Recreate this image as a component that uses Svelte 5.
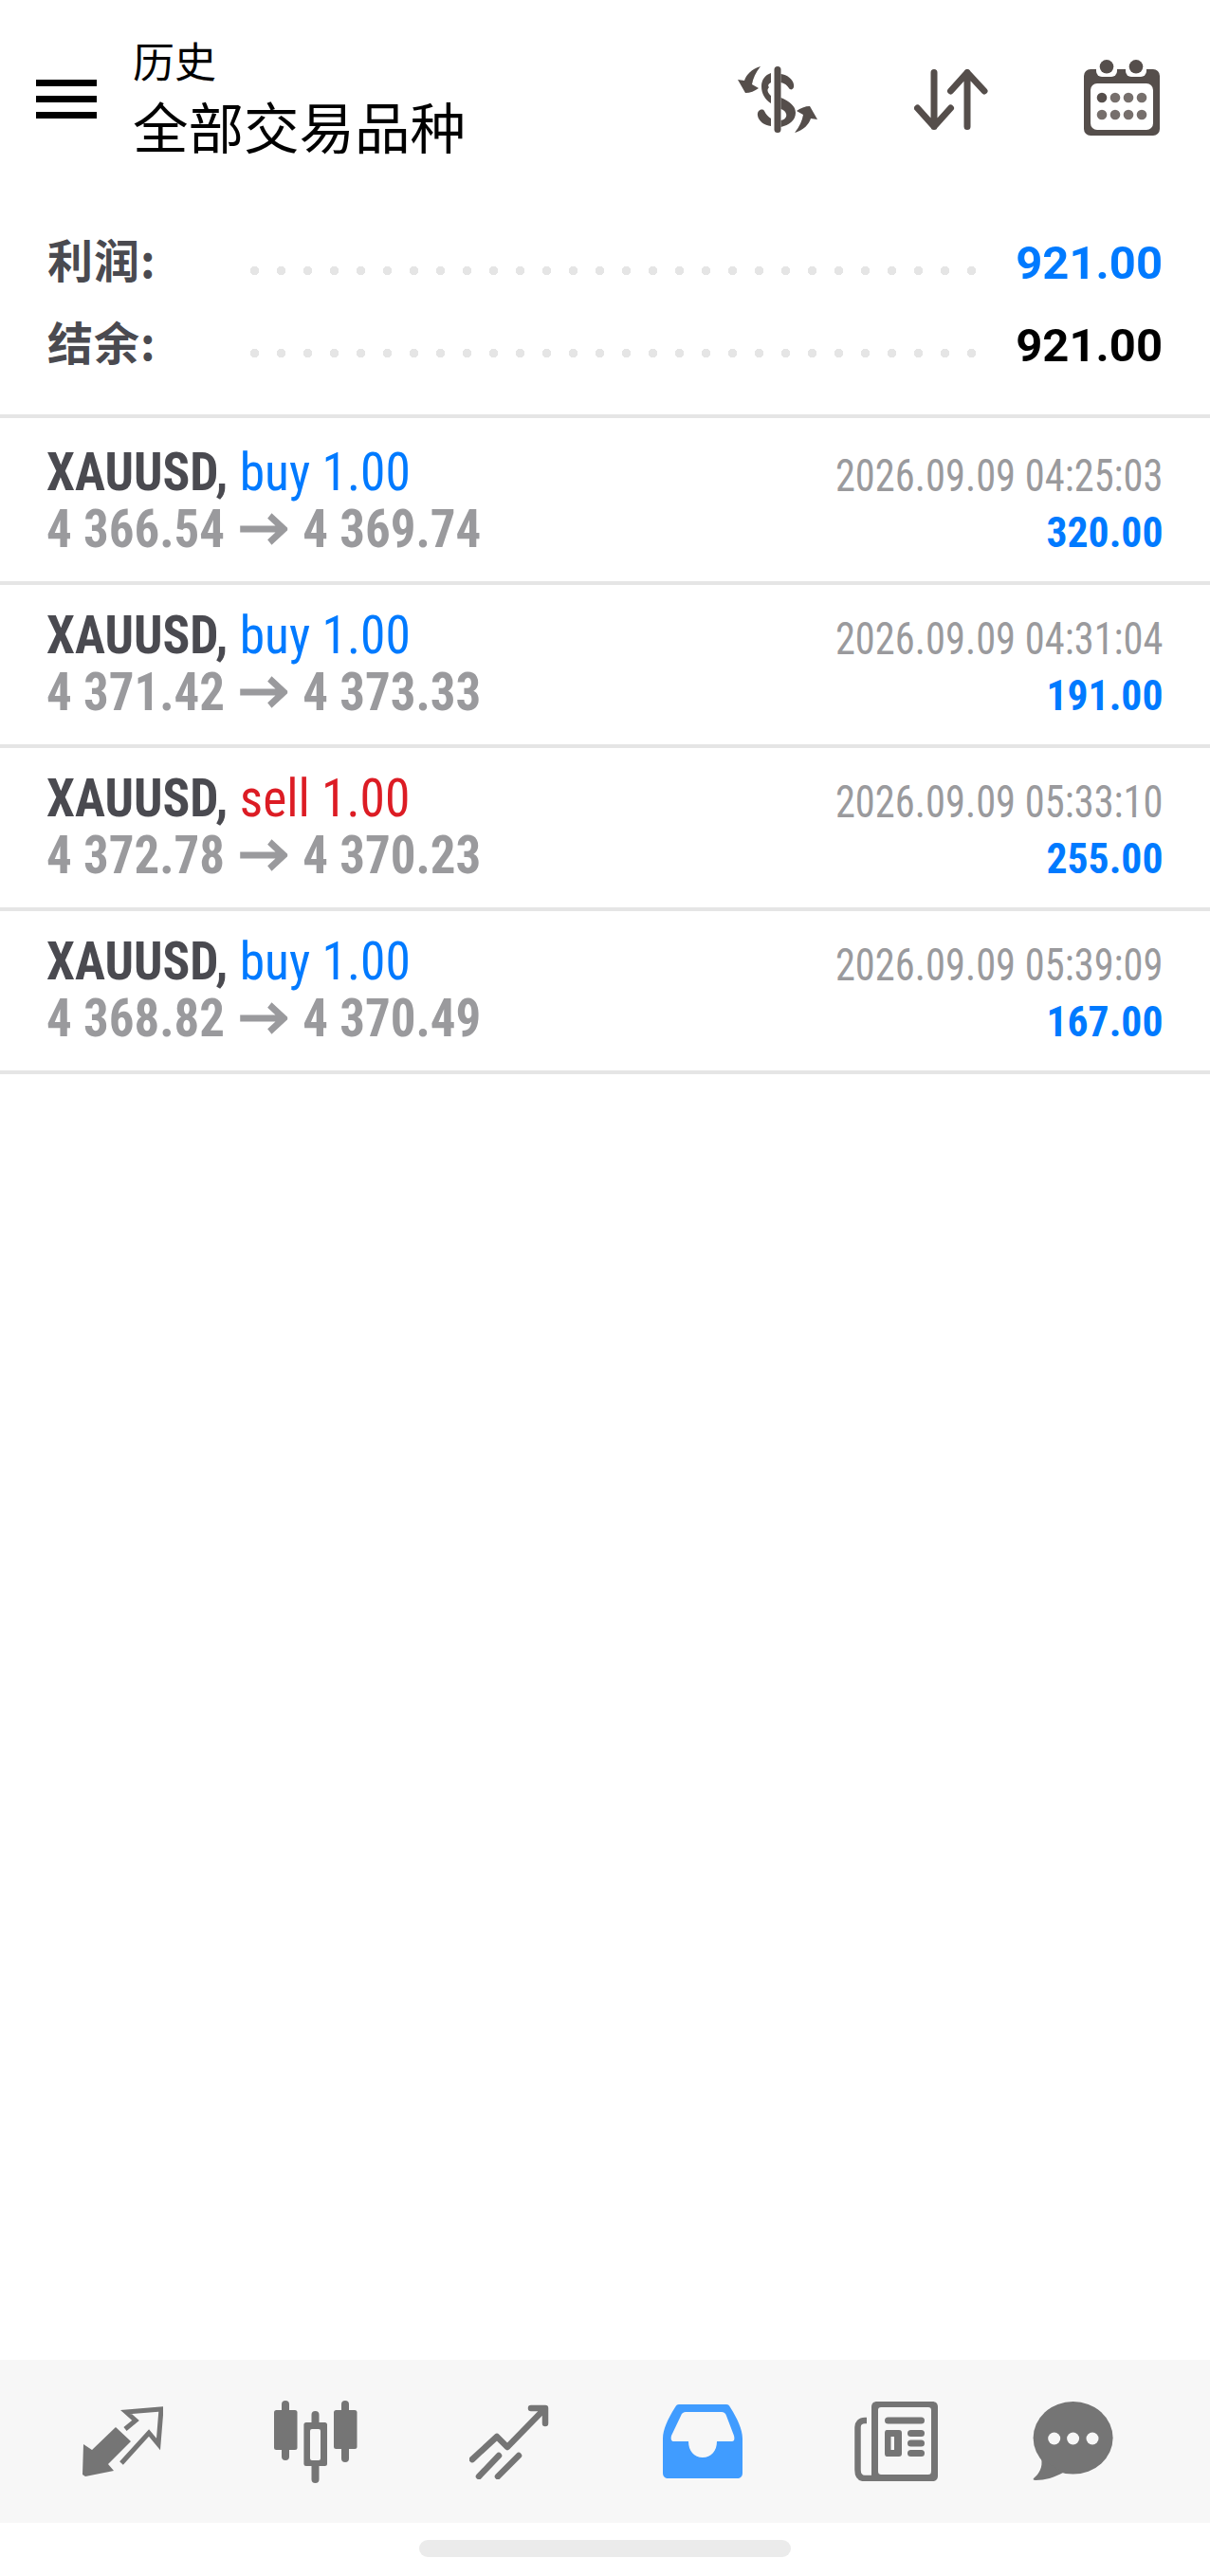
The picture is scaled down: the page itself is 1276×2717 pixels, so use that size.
<script>
	const trades = [
		{ side: 'buy', open: '4 366.54', close: '4 369.74', time: '2026.09.09 04:25:03', profit: '320.00' },
		{ side: 'buy', open: '4 371.42', close: '4 373.33', time: '2026.09.09 04:31:04', profit: '191.00' },
		{ side: 'sell', open: '4 372.78', close: '4 370.23', time: '2026.09.09 05:33:10', profit: '255.00' },
		{ side: 'buy', open: '4 368.82', close: '4 370.49', time: '2026.09.09 05:39:09', profit: '167.00' },
	];
</script>

<div class="page">
	<header class="topbar">
		<button class="burger" aria-label="menu"><i></i><i></i><i></i></button>
		<div class="titles">
			<div class="sub">历史</div>
			<div class="main">全部交易品种</div>
		</div>
		<div class="actions">
			<svg class="ic-dollar" viewBox="0 0 85 70" fill="#554e4b">
				<rect x="38.500" y="0" width="7" height="70" rx="3.500" />
				<path d="M35 7C29 9 25 14 25 21C25 29 29 35 35 39V31C32 28 30 25 33 22C31 20 33 18 35 17Z" />
				<path d="M45.500 8C52 9 58 13 59 19C60 24 56 26 54 23C52 20 50 18 45.500 17Z" />
				<path d="M45.500 33C55 37 61 42 61 49C61 57 54 62 45.500 64V57C50 56 52 53 51 50C50 47 48 46 45.500 45Z" />
				<path d="M35 55V63C28 62 22 58 21 52C20 46 26 44 28 47C30 51 32 53 35 55Z" />
				<path d="M24 0C14 3 9 9 7 15L0 14L8 28C13 28 18 26 22 23L15 19C16 13 19 6 24 0Z" />
				<path d="M24 0C14 3 9 9 7 15L0 14L8 28C13 28 18 26 22 23L15 19C16 13 19 6 24 0Z" transform="rotate(180 42 35)" />
			</svg>
			<svg class="ic-sort" viewBox="0 0 78 64" fill="none" stroke="#554e4b" stroke-width="7" stroke-linecap="round" stroke-linejoin="round">
				<path d="M21 3.500V60.500M3.500 41L21 60.500L38.500 41" />
				<path d="M56 3.500V60.500M38.500 23L56 3.500L74 23" />
			</svg>
			<svg class="ic-cal" viewBox="0 0 80 80">
				<rect x="0" y="10" width="80" height="70" rx="7" fill="#554e4b" />
				<rect x="13" y="4" width="22" height="14" rx="6" fill="#fff" />
				<rect x="44" y="4" width="22" height="14" rx="6" fill="#fff" />
				<circle cx="24" cy="7.300" r="7.300" fill="#554e4b" />
				<circle cx="55" cy="7.300" r="7.300" fill="#554e4b" />
				<rect x="7" y="25" width="66" height="49" rx="7" fill="#fff" />
				<g fill="#766f6c">
					<circle cx="19" cy="40" r="5.300" fill="#554e4b" /><circle cx="33" cy="40" r="5.300" /><circle cx="47" cy="40" r="5.300" /><circle cx="61" cy="40" r="5.300" />
					<circle cx="19" cy="58" r="5.300" /><circle cx="33" cy="58" r="5.300" /><circle cx="47" cy="58" r="5.300" /><circle cx="61" cy="58" r="5.300" />
				</g>
			</svg>
		</div>
	</header>

	<section class="summary">
		<div class="line">
			<span class="label">利润:</span>
			<span class="dots"></span>
			<span class="amount blue">921.00</span>
		</div>
		<div class="line">
			<span class="label">结余:</span>
			<span class="dots"></span>
			<span class="amount">921.00</span>
		</div>
	</section>

	<ul class="trades">
		{#each trades as t}
			<li class="trade">
				<div class="left">
					<div class="head"><b>XAUUSD,</b> <span class={t.side}>{t.side} 1.00</span></div>
					<div class="prices">
						<span>{t.open}</span>
						<svg class="ic-arrow" viewBox="0 0 53 34" preserveAspectRatio="none" fill="none" stroke="#9a9a9d" stroke-width="7"><path d="M0 17H49M33 3L49 17L33 31" /></svg>
						<span>{t.close}</span>
					</div>
				</div>
				<div class="right">
					<div class="time">{t.time}</div>
					<div class="profit">{t.profit}</div>
				</div>
			</li>
		{/each}
	</ul>

	<nav class="tabs">
		<svg width="85" height="75" viewBox="0 0 85 75">
			<path fill="#757575" d="M1 40L10 46L35 22L51 37L27 61L33 68L3 74L0 72Z" />
			<path fill="none" stroke="#757575" stroke-width="5" d="M45 24L56 15L46 6L83 3L80 40L70 28L41 60" />
		</svg>
		<svg width="88" height="87" viewBox="0 0 88 87" fill="#757575">
			<rect x="8" y="0" width="8" height="63" rx="4" /><rect x="0" y="10" width="24.500" height="42" rx="2.500" />
			<rect x="39.500" y="11" width="8" height="76" rx="4" /><rect x="31.400" y="23" width="24.600" height="46" rx="2.500" />
			<rect x="38" y="30" width="11" height="33" rx="2" fill="#f7f7f7" />
			<rect x="71" y="0" width="8" height="65" rx="4" /><rect x="63" y="10" width="24.500" height="41" rx="2.500" />
		</svg>
		<svg width="84" height="79" viewBox="0 0 84 79" fill="none" stroke="#757575" stroke-width="6.500" stroke-linecap="round" stroke-linejoin="round">
			<path d="M3 58L29 34L40 45L79 5M65 4H80V20" />
			<path d="M10 76L31 54M30 76L52 54" />
		</svg>
		<svg width="84" height="78" viewBox="0 0 84 78">
			<path fill="#409cff" fill-rule="evenodd" d="M17 0H67C69 0 70 1 71 3C78 14 84 26 84 36V72C84 76 82 78 78 78H6C2 78 0 76 0 72V36C0 26 6 14 13 3C14 1 15 0 17 0ZM24 8C22 8 20 9 19 12L9 33C8 37 9 39 12 39H27C27 49 33 56 42 56C51 56 57 49 57 39H73C75 39 76 37 75 33L67 12C66 9 64 8 62 8Z" />
		</svg>
		<svg width="88" height="84" viewBox="0 0 88 84" fill="#757575">
			<path fill-rule="evenodd" d="M24 0H82C86 0 88 2 88 6V78C88 82 86 84 82 84H18V6C18 2 20 0 24 0ZM28 6C26 6 25 7 25 9V73C25 76 26 77 29 77H78C80 77 81 76 81 73V9C81 7 80 6 78 6Z" />
			<path fill="none" stroke="#757575" stroke-width="6.500" d="M13 20H11C6 20 3.500 23 3.500 27V72C3.500 78 6 81 11 81H19" />
			<rect x="32" y="16.500" width="42" height="7" rx="3.500" />
			<path fill-rule="evenodd" d="M34 30H47C49 30 50 31 50 33V55C50 57 49 58 47 58H34C33 58 32 57 32 55V33C32 31 33 30 34 30ZM38.500 37V51H42V37Z" />
			<rect x="56" y="30" width="18" height="7" rx="3.500" /><rect x="56" y="40.500" width="18" height="7" rx="3.500" /><rect x="56" y="51" width="18" height="7" rx="3.500" />
		</svg>
		<svg class="last" width="85" height="84" viewBox="0 0 85 84">
			<ellipse cx="42.600" cy="38.300" rx="42" ry="38.300" fill="#757575" />
			<path fill="#757575" d="M9 60C11 69 7 76 1 81C0 82 1 83 3 83C13 83 23 80 32 75Z" />
			<circle cx="22.700" cy="39" r="6.500" fill="#f7f7f7" /><circle cx="42.600" cy="39" r="6.500" fill="#f7f7f7" /><circle cx="63" cy="39" r="6.500" fill="#f7f7f7" />
		</svg>
	</nav>
	<div class="home"><span></span></div>
</div>

<style>
	:global(body) {
		margin: 0;
		background: #fff;
	}
	.page {
		display: flex;
		flex-direction: column;
		width: 1276px;
		height: 2717px;
		font-family: Roboto, 'Noto Sans CJK SC', sans-serif;
	}
	.topbar {
		display: flex;
		align-items: flex-start;
		height: 221px;
		box-sizing: border-box;
		padding: 0 53px 0 38px;
	}
	.burger {
		display: flex;
		flex-direction: column;
		gap: 10px;
		width: 64px;
		margin-top: 84px;
		padding: 0;
		border: 0;
		background: none;
	}
	.burger i {
		display: block;
		height: 7px;
		background: #000;
	}
	.titles {
		margin-left: 38px;
		padding-top: 35px;
		font-family: 'Noto Sans CJK SC', sans-serif;
		color: #000;
	}
	.sub {
		font-size: 44px;
		line-height: 56px;
	}
	.main {
		font-size: 58.5px;
		line-height: 82px;
	}
	.actions {
		display: flex;
		align-items: flex-start;
		margin-left: auto;
	}
	.actions svg {
		display: block;
	}
	.ic-dollar {
		width: 85px;
		height: 70px;
		margin-top: 70px;
	}
	.ic-sort {
		width: 78px;
		height: 64px;
		margin: 73px 0 0 101px;
	}
	.ic-cal {
		width: 80px;
		height: 80px;
		margin: 63px 0 0 101px;
	}
	.summary {
		box-sizing: border-box;
		height: 216px;
		padding: 14px 50px 0 50px;
	}
	.line {
		display: flex;
		align-items: center;
		height: 87px;
	}
	.label {
		width: 214px;
		margin-bottom: 14px;
		font-family: 'Noto Sans CJK SC', sans-serif;
		font-weight: 700;
		font-size: 48px;
		letter-spacing: 1px;
		color: #4a4a50;
	}
	.dots {
		width: 770px;
		height: 9px;
		margin-top: 14px;
		background-image: radial-gradient(circle at 4.5px 4.5px, #e5e5e5 4.5px, transparent 5px);
		background-size: 28px 9px;
		background-repeat: repeat-x;
	}
	.amount {
		margin-left: auto;
		margin-bottom: 2px;
		font-size: 49px;
		font-weight: 700;
		color: #000;
	}
	.amount.blue {
		color: #007aff;
	}
	.trades {
		margin: 0;
		padding: 4px 0 0;
		list-style: none;
		border-top: 4px solid #e5e5e5;
	}
	.trade {
		display: flex;
		justify-content: space-between;
		box-sizing: border-box;
		height: 172px;
		padding: 23px 50px 0 49px;
		border-bottom: 4px solid #e5e5e5;
		font-stretch: 75%;
	}
	/* the reference face is a touch narrower than Roboto's narrowest width */
	.head {
		font-size: 56px;
		line-height: 60px;
		white-space: nowrap;
		transform: scaleX(0.955);
		transform-origin: left;
	}
	.head b {
		font-weight: 700;
		color: #4a4a50;
	}
	.buy {
		color: #007aff;
	}
	.sell {
		color: #dc1c24;
	}
	.prices {
		display: flex;
		align-items: center;
		gap: 17px;
		font-size: 56px;
		line-height: 60px;
		font-weight: 700;
		color: #9a9a9d;
		white-space: pre;
		transform: scaleX(0.945);
		transform-origin: left;
	}
	.ic-arrow {
		width: 53px;
		height: 34px;
		flex: none;
	}
	.right {
		padding-top: 4px;
		text-align: right;
	}
	.time {
		font-size: 48px;
		line-height: 60px;
		color: #9a9a9d;
		transform: scaleX(0.885);
		transform-origin: right;
	}
	.profit {
		font-size: 45px;
		line-height: 60px;
		font-weight: 700;
		color: #007aff;
		transform: scaleX(0.97);
		transform-origin: right;
	}
	.tabs {
		display: grid;
		grid-template-columns: repeat(6, 204px);
		align-items: center;
		justify-items: center;
		height: 172px;
		box-sizing: border-box;
		margin-top: auto;
		padding-left: 27px;
		background: #f7f7f7;
	}
	.tabs .last {
		margin-right: 36px;
	}
	.home {
		display: flex;
		justify-content: center;
		height: 56px;
		padding-top: 18px;
		box-sizing: border-box;
	}
	.home span {
		width: 392px;
		height: 18px;
		border-radius: 9px;
		background: #ebebeb;
	}
</style>
